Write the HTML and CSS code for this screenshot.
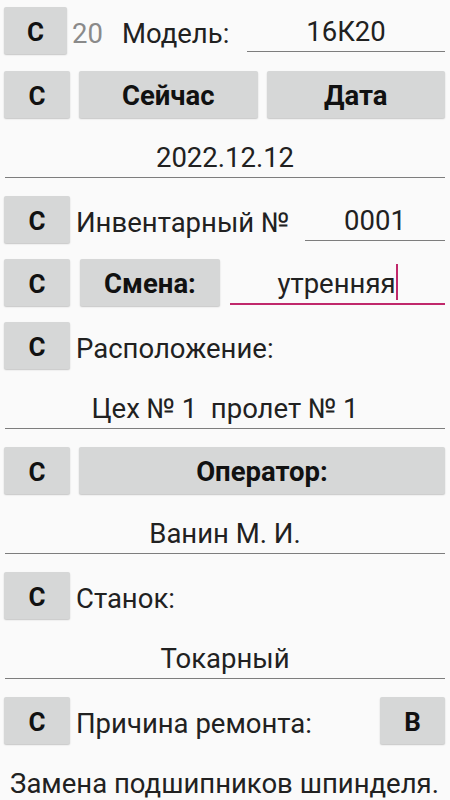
FILE: index.html
```html
<!DOCTYPE html>
<html lang="ru">
<head>
<meta charset="utf-8">
<title>Форма ремонта</title>
<link rel="stylesheet" href="styles.css">
</head>
<body>
<div class="screen">
  <div class="row row-first">
    <div class="btn btn-c btn-c-first">С</div>
    <span class="num">20</span>
    <span class="label label-model">Модель:</span>
    <div class="field field-model">16К20</div>
  </div>
  <div class="row">
    <div class="btn btn-c">С</div>
    <div class="btn btn-grow btn-gap">Сейчас</div>
    <div class="btn btn-grow btn-gap">Дата</div>
  </div>
  <div class="field field-full">2022.12.12</div>
  <div class="row">
    <div class="btn btn-c">С</div>
    <span class="label">Инвентарный №</span>
    <div class="field field-inv">0001</div>
  </div>
  <div class="row">
    <div class="btn btn-c">С</div>
    <div class="btn btn-shift">Смена:</div>
    <div class="field field-active"><span class="value">утренняя</span><span class="caret"></span></div>
  </div>
  <div class="row">
    <div class="btn btn-c">С</div>
    <span class="label">Расположение:</span>
  </div>
  <div class="field field-full field-pre">Цех № 1  пролет № 1</div>
  <div class="row">
    <div class="btn btn-c">С</div>
    <div class="btn btn-grow btn-gap">Оператор:</div>
  </div>
  <div class="field field-full">Ванин М. И.</div>
  <div class="row">
    <div class="btn btn-c">С</div>
    <span class="label">Станок:</span>
  </div>
  <div class="field field-full">Токарный</div>
  <div class="row">
    <div class="btn btn-c">С</div>
    <span class="label">Причина ремонта:</span>
    <div class="btn btn-c btn-end">В</div>
  </div>
  <div class="note">Замена подшипников шпинделя.</div>
</div>
</body>
</html>
```
FILE: styles.css
```css
html, body {
  margin: 0;
  padding: 0;
  background: #fafafa;
  overflow: hidden;
}

body {
  width: 450px;
  height: 800px;
  font-family: Roboto, "Noto Sans", "Liberation Sans", sans-serif;
  font-size: 27.5px;
  color: #212121;
}

.screen {
  display: flex;
  flex-direction: column;
  gap: 16px;
  padding: 7px 5px 0 4px;
}

.row {
  display: flex;
  align-items: center;
  height: 47px;
}

.row-first {
  margin-bottom: 1px;
}

.btn {
  box-sizing: border-box;
  height: 47px;
  display: flex;
  align-items: center;
  justify-content: center;
  padding-top: 2px;
  background: #d6d7d7;
  border-radius: 2px;
  box-shadow: 0 1px 1.5px rgba(0, 0, 0, 0.22);
  font-weight: 700;
  color: #111;
  white-space: nowrap;
}

.btn-c {
  width: 66px;
  flex: none;
  font-size: 26px;
}

.btn-c-first {
  width: 63px;
}

.btn-grow {
  flex: 1;
}

.btn-gap {
  margin-left: 9px;
}

.btn-shift {
  width: 140px;
  flex: none;
  margin-left: 10px;
}

.btn-end {
  width: 65px;
  margin-left: auto;
}

.num {
  margin-left: 5px;
  padding-top: 6px;
  color: #8a8a8a;
}

.label {
  margin-left: 6px;
  padding-top: 6px;
  white-space: nowrap;
}

.label-model {
  margin-left: 19px;
}

.field {
  box-sizing: border-box;
  align-self: flex-start;
  height: 45px;
  padding-top: 6px;
  line-height: 38px;
  border-bottom: 1px solid #7d7d7d;
  text-align: center;
  white-space: nowrap;
}

.field-model {
  width: 198px;
  margin-left: auto;
}

.field-inv {
  width: 140px;
  margin-left: auto;
}

.field-active {
  flex: 1;
  height: 46px;
  margin-left: 10px;
  border-bottom: 2px solid #c0286b;
  display: flex;
  justify-content: center;
  align-items: flex-start;
}

.caret {
  display: inline-block;
  width: 2px;
  height: 36px;
  margin-top: -1px;
  background: #c0286b;
}

.field-full {
  align-self: stretch;
  height: 44px;
  margin: 0 0 2px 1px;
  padding-top: 5px;
}

.field-pre {
  white-space: pre;
}

.note {
  height: 47px;
  padding-top: 5px;
  line-height: 38px;
  text-align: center;
  white-space: nowrap;
}
```
